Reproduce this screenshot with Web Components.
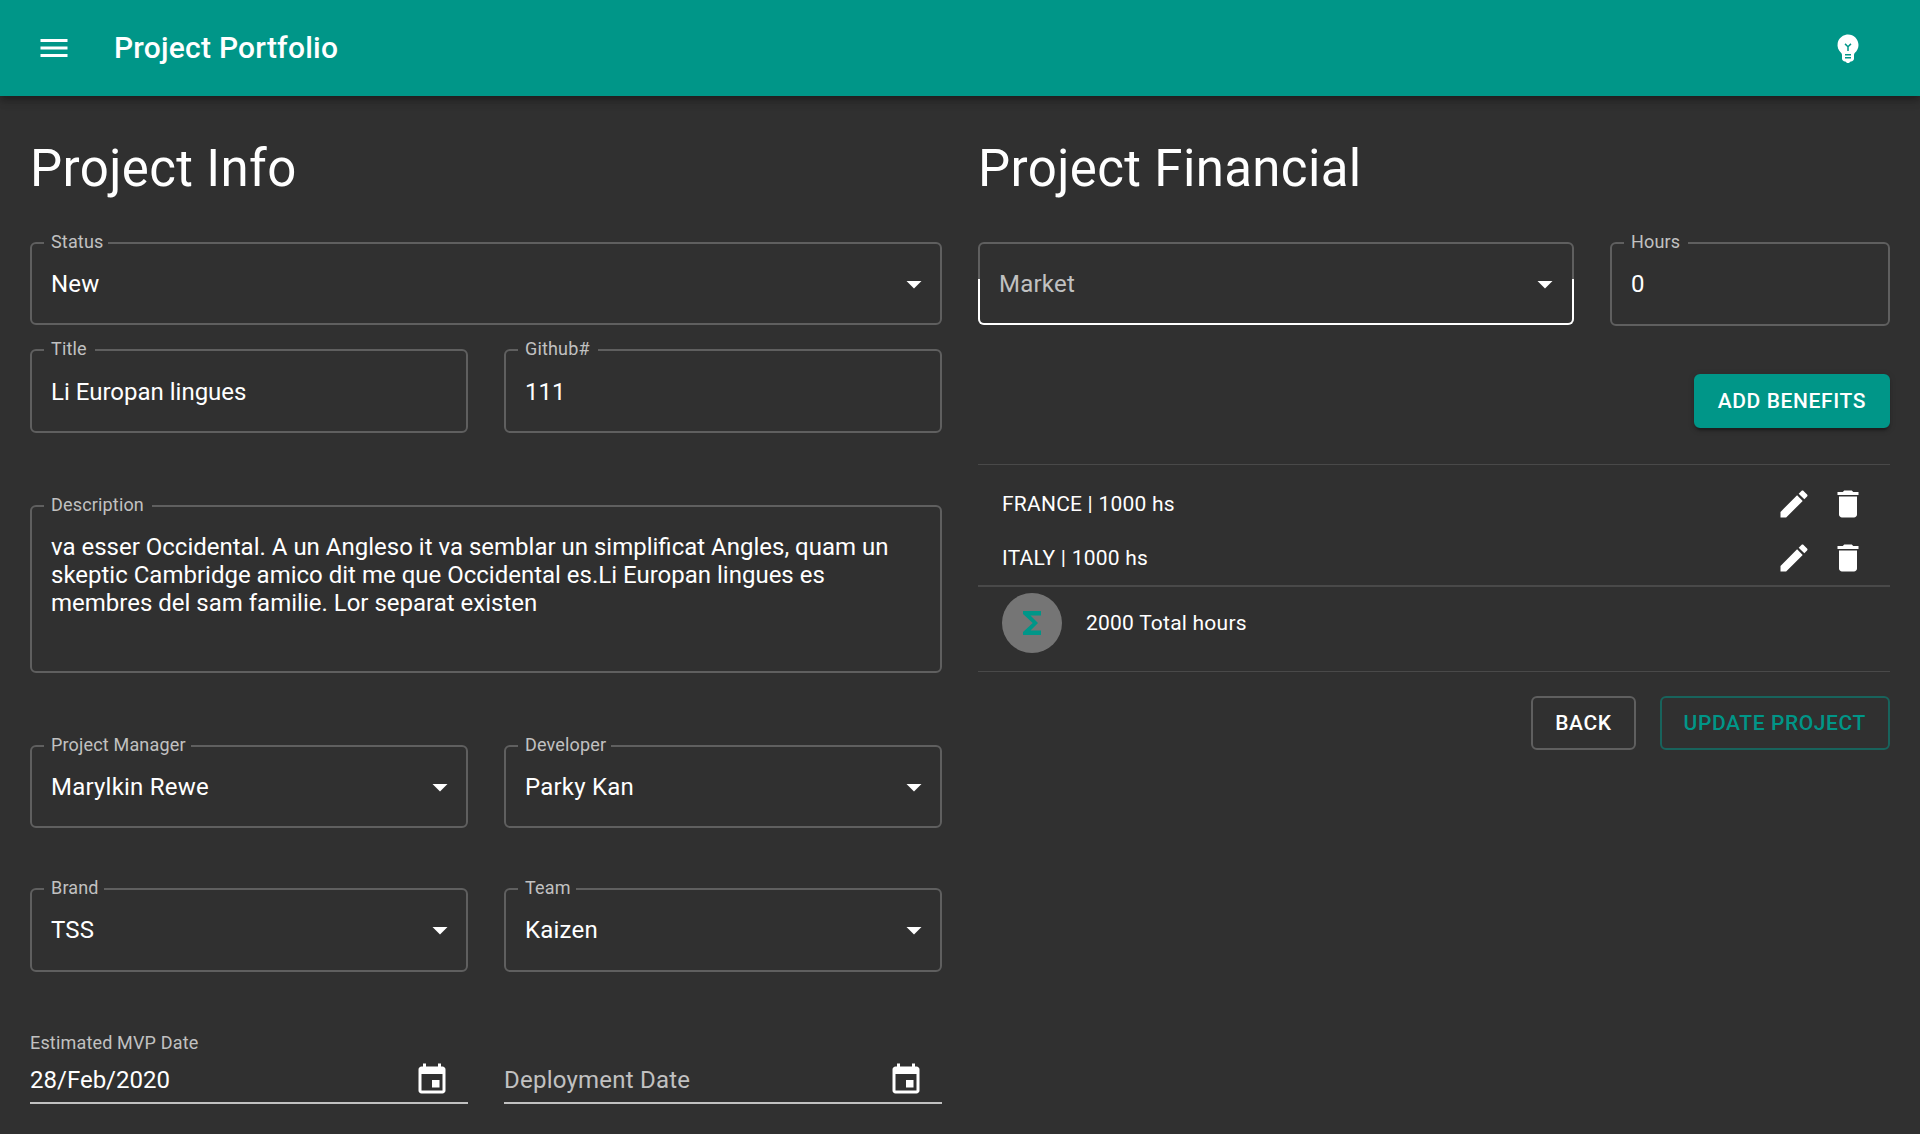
<!DOCTYPE html>
<html lang="en">
<head>
<meta charset="utf-8">
<title>Project Portfolio</title>
<style>
  html, body { margin: 0; height: 100%; overflow: hidden; background: #303030; }
  body { font-family: Roboto, "Noto Sans", sans-serif; color: #fff; }
</style>
</head>
<body>
<project-page></project-page>

<script>
const ICONS = {
  menu: 'M3 18h18v-2H3v2zm0-5h18v-2H3v2zm0-7v2h18V6H3z',
  bulb: 'M12 3c-.46 0-.93.04-1.4.14-2.76.53-4.96 2.76-5.48 5.52-.48 2.61.48 5.01 2.22 6.56.43.38.66.91.66 1.47V19c0 1.1.9 2 2 2h.28c.35.6.98 1 1.72 1s1.38-.4 1.72-1H14c1.1 0 2-.9 2-2v-2.31c0-.55.22-1.09.64-1.46C18.09 13.95 19 12.08 19 10c0-3.87-3.13-7-7-7zm2 16h-4v-1h4v1zm0-2h-4v-1h4v1zm-1.5-5.59V14h-1v-2.59L9.67 9.59l.71-.71L12 10.5l1.62-1.62.71.71-1.83 1.82z',
  arrow: 'M7 10l5 5 5-5z',
  edit: 'M3 17.25V21h3.75L17.81 9.94l-3.75-3.75L3 17.25zM20.71 7.04c.39-.39.39-1.02 0-1.41l-2.34-2.34c-.39-.39-1.02-.39-1.41 0l-1.83 1.83 3.75 3.75 1.83-1.83z',
  trash: 'M6 19c0 1.1.9 2 2 2h8c1.1 0 2-.9 2-2V7H6v12zM19 4h-3.5l-1-1h-5l-1 1H5v2h14V4z',
  sum: 'M18 4H6v2l6.5 6L6 18v2h12v-3h-7l5-5-5-5h7z',
  event: 'M17 12h-5v5h5v-5zM16 1v2H8V1H6v2H5c-1.11 0-1.99.9-1.99 2L3 19c0 1.1.89 2 2 2h14c1.1 0 2-.9 2-2V5c0-1.1-.9-2-2-2h-1V1h-2zm3 18H5V8h14v11z'
};

class Base extends HTMLElement {
  constructor() { super(); this.attachShadow({ mode: 'open' }); }
  connectedCallback() { this.shadowRoot.innerHTML = this.render(); }
  attr(name, fallback = '') { return this.getAttribute(name) ?? fallback; }
}

customElements.define('md-icon', class extends Base {
  render() {
    return `<style>:host{display:block;flex:none;width:36px;height:36px}svg{display:block;width:36px;height:36px;fill:currentColor}</style>
    <svg viewBox="0 0 24 24"><path d="${ICONS[this.attr('name')]}"/></svg>`;
  }
});

customElements.define('app-bar', class extends Base {
  render() {
    return `<style>
      :host{display:flex;align-items:center;box-sizing:border-box;height:96px;padding:0 54px 0 36px;background:#009688;
        box-shadow:0 3px 6px -1.5px rgba(0,0,0,.2),0 6px 7.5px rgba(0,0,0,.14),0 1.5px 15px rgba(0,0,0,.12);position:relative}
      h6{margin:0 0 0 42px;flex:1;font-size:30px;font-weight:500;line-height:48px;letter-spacing:.0075em}
    </style><md-icon name="menu"></md-icon><h6><slot></slot></h6><md-icon name="bulb"></md-icon>`;
  }
});

/* Outlined field; notch is the width of the gap in the top border. */
customElements.define('outlined-field', class extends Base {
  render() {
    const label = this.attr('label'), select = this.hasAttribute('select');
    return `<style>
      :host{display:block;position:relative;box-sizing:border-box;height:84px;border:2px solid #5f5f5f;border-radius:6px}
      :host([select]){height:83px}
      :host([tall]){height:84px}
      :host([multiline]){height:168px}
      .label{position:absolute;left:12px;top:-13px;height:21px;box-sizing:border-box;padding-left:7px;width:${this.attr('notch', '0')}px;
        background:#303030;color:#c1c1c1;font-size:18px;line-height:21px;letter-spacing:.00938em;white-space:nowrap}
      .row{display:flex;justify-content:space-between;padding:27px 8.5px 0 19px}
      :host([raised]) .row{padding-top:26px}
      :host([select]) .row{padding-top:22px}
      .value{font-size:24px;line-height:28px;white-space:pre-line}
      :host([select]) .value{padding-top:4px;letter-spacing:.00938em}
      :host([placeholder]) .value{color:#c1c1c1}
      :host([active]) .row{padding-right:9px}
      :host([active])::after{content:"";position:absolute;left:-2px;right:-2px;top:35px;bottom:-2px;border:2px solid #fff;border-top:0;border-radius:0 0 6px 6px}
    </style>${label ? `<span class="label">${label}</span>` : ''}
    <div class="row"><span class="value"><slot></slot></span>${select ? '<md-icon name="arrow"></md-icon>' : ''}</div>`;
  }
});

customElements.define('date-field', class extends Base {
  render() {
    return `<style>
      :host{display:block;box-sizing:border-box;height:72px;border-bottom:2px solid #c1c1c1;border-image:linear-gradient(#7a7a7a 50%,#c1c1c1 50%) 2}
      .label{height:21px;font-size:18px;line-height:21px;letter-spacing:.00938em;color:#c1c1c1}
      .row{display:flex;justify-content:space-between;padding:9px 18px 0 0}
      .value{padding-top:4px;font-size:24px;line-height:28px}
      :host([placeholder]) .value{color:#c1c1c1;letter-spacing:.00938em}
    </style><div class="label">${this.attr('label')}</div>
    <div class="row"><span class="value"><slot></slot></span><md-icon name="event"></md-icon></div>`;
  }
});

customElements.define('md-button', class extends Base {
  render() {
    return `<style>
      :host{display:flex;align-items:center;justify-content:center;box-sizing:border-box;height:54px;padding:0 22px;border:2px solid #5f5f5f;border-radius:6px;
        font-size:21px;font-weight:500;line-height:24px;letter-spacing:.02857em;white-space:nowrap}
      :host([contained]){background:#009688;border-color:#009688;
        box-shadow:0 4.5px 1.5px -3px rgba(0,0,0,.2),0 3px 3px rgba(0,0,0,.14),0 1.5px 7.5px rgba(0,0,0,.12)}
      :host([primary]){color:#009688;border-color:#18635c}
    </style><slot></slot>`;
  }
});

customElements.define('benefit-row', class extends Base {
  render() {
    return `<style>
      :host{display:flex;align-items:center;height:54px;padding:0 24px;gap:18px}
      span{flex:1;font-size:21px;line-height:24px;letter-spacing:.01071em}
    </style><span><slot></slot></span><md-icon name="edit"></md-icon><md-icon name="trash"></md-icon>`;
  }
});

customElements.define('benefit-total', class extends Base {
  render() {
    return `<style>
      :host{display:flex;align-items:center;height:60px;padding:6px 24px 18px;gap:24px}
      i{display:flex;align-items:center;justify-content:center;width:60px;height:60px;border-radius:50%;background:#757575;color:#009688}
      span{font-size:21px;line-height:24px;letter-spacing:.01071em}
    </style><i><md-icon name="sum"></md-icon></i><span><slot></slot></span>`;
  }
});

customElements.define('page-section', class extends Base {
  render() {
    return `<style>
      :host{display:flex;flex-direction:column;width:912px}
      h4{margin:0 0 42px;font-size:51px;font-weight:400;line-height:63px;letter-spacing:.00735em}
    </style><h4>${this.attr('heading')}</h4><slot></slot>`;
  }
});

customElements.define('project-page', class extends Base {
  render() {
    return `<style>
      :host{display:block}
      main{display:flex;gap:36px;padding:41px 30px 0}
      .pair{display:grid;grid-template-columns:438px 438px;gap:36px}
      .mt24{margin-top:24px}.mt60{margin-top:60px}.mt72{margin-top:72px}
      .money{display:grid;grid-template-columns:596px 280px;gap:36px;align-items:start}
      .end{display:flex;justify-content:flex-end;gap:24px}
      .list{margin:36px 0 24px;border-top:1px solid #494949;border-bottom:1px solid #494949}
      .rows{padding-top:12px;border-bottom:2px solid #494949}
    </style>
    <app-bar>Project Portfolio</app-bar>
    <main>
      <page-section heading="Project Info">
        <outlined-field select label="Status" notch="64">New</outlined-field>
        <div class="pair mt24">
          <outlined-field label="Title" notch="51">Li Europan lingues</outlined-field>
          <outlined-field label="Github#" notch="80">111</outlined-field>
        </div>
        <outlined-field class="mt72" multiline raised label="Description" notch="108">va esser Occidental. A un Angleso it va semblar un simplificat Angles, quam un
skeptic Cambridge amico dit me que Occidental es.Li Europan lingues es
membres del sam familie. Lor separat existen</outlined-field>
        <div class="pair mt72">
          <outlined-field select label="Project Manager" notch="147">Marylkin Rewe</outlined-field>
          <outlined-field select label="Developer" notch="93">Parky Kan</outlined-field>
        </div>
        <div class="pair mt60">
          <outlined-field select tall label="Brand" notch="60">TSS</outlined-field>
          <outlined-field select tall label="Team" notch="58">Kaizen</outlined-field>
        </div>
        <div class="pair mt60">
          <date-field label="Estimated MVP Date">28/Feb/2020</date-field>
          <date-field placeholder>Deployment Date</date-field>
        </div>
      </page-section>
      <page-section heading="Project Financial">
        <div class="money">
          <outlined-field select placeholder active>Market</outlined-field>
          <outlined-field raised label="Hours" notch="64">0</outlined-field>
        </div>
        <div class="end" style="margin-top:48px"><md-button contained>ADD BENEFITS</md-button></div>
        <div class="list">
          <div class="rows">
            <benefit-row>FRANCE | 1000 hs</benefit-row>
            <benefit-row>ITALY | 1000 hs</benefit-row>
          </div>
          <benefit-total>2000 Total hours</benefit-total>
        </div>
        <div class="end"><md-button>BACK</md-button><md-button primary>UPDATE PROJECT</md-button></div>
      </page-section>
    </main>`;
  }
});
</script>
</body>
</html>
